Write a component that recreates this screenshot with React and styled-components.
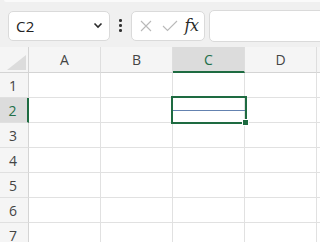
import React from "react";
import styled, { createGlobalStyle } from "styled-components";

const GlobalStyle = createGlobalStyle`
  html, body {
    margin: 0;
    padding: 0;
    background: #ffffff;
    overflow: hidden;
  }
  body {
    font-family: "Open Sans", "Noto Sans", sans-serif;
  }
`;

const COLUMNS = ["A", "B", "C", "D", ""];
const ROWS = [1, 2, 3, 4, 5, 6, 7];
const ACTIVE_COL = "C";
const ACTIVE_ROW = 2;

export default function App() {
  return (
    <>
      <GlobalStyle />
      <StyledPage>
        <StyledToolbar>
          <StyledTopStrip />
          <StyledNameBox>
            <StyledNameText>C2</StyledNameText>
            <ChevronIcon />
          </StyledNameBox>
          <StyledDots>
            <span />
            <span />
            <span />
          </StyledDots>
          <StyledFxGroup>
            <CancelIcon />
            <CheckIcon />
            <StyledFx>fx</StyledFx>
          </StyledFxGroup>
          <StyledFormulaInput />
        </StyledToolbar>

        <StyledGrid>
          <StyledCorner>
            <StyledCornerTriangle />
          </StyledCorner>
          {COLUMNS.map((col, i) => (
            <StyledColHeader key={i} $active={col === ACTIVE_COL}>
              {col}
            </StyledColHeader>
          ))}
          {ROWS.map((row) => (
            <React.Fragment key={row}>
              <StyledRowHeader $active={row === ACTIVE_ROW}>{row}</StyledRowHeader>
              {COLUMNS.map((col, i) => (
                <StyledCell key={i}>
                  {row === ACTIVE_ROW && col === ACTIVE_COL && (
                    <StyledSelection>
                      <StyledEditLine />
                      <StyledFillHandle />
                    </StyledSelection>
                  )}
                </StyledCell>
              ))}
            </React.Fragment>
          ))}
        </StyledGrid>
      </StyledPage>
    </>
  );
}

const ChevronIcon = () => (
  <svg width="10" height="7" viewBox="0 0 10 7">
    <path d="M1.5 1.5 L5 5 L8.5 1.5" fill="none" stroke="#2b2b2b" strokeWidth="1.6" />
  </svg>
);

const CancelIcon = () => (
  <svg width="14" height="14" viewBox="0 0 14 14">
    <path d="M2 2 L12 12 M12 2 L2 12" fill="none" stroke="#b9b9b9" strokeWidth="1.1" />
  </svg>
);

const CheckIcon = () => (
  <svg width="16" height="12" viewBox="0 0 16 12">
    <path d="M1 6 L5.5 10.5 L15 1" fill="none" stroke="#b9b9b9" strokeWidth="1.1" />
  </svg>
);

const StyledPage = styled.div`
  width: 320px;
  height: 247px;
  overflow: hidden;
  background: #ffffff;
`;

const StyledToolbar = styled.div`
  position: relative;
  display: flex;
  align-items: center;
  height: 47px;
  box-sizing: border-box;
  padding: 11px 0 7px 8px;
  background: #f0f0f0;
`;

const StyledTopStrip = styled.div`
  position: absolute;
  top: 0;
  left: 4px;
  right: 0;
  height: 2px;
  background: #fafafa;
  border-bottom-left-radius: 4px;
`;

const StyledNameBox = styled.div`
  display: flex;
  align-items: center;
  justify-content: space-between;
  width: 102px;
  height: 30px;
  box-sizing: border-box;
  padding: 0 6px 0 7px;
  background: #ffffff;
  border: 1px solid #dadada;
  border-radius: 5px;
`;

const StyledNameText = styled.span`
  font-family: "Open Sans", "Noto Sans", sans-serif;
  font-size: 15px;
  color: #222222;
  letter-spacing: 0.2px;
`;

const StyledDots = styled.div`
  display: flex;
  flex-direction: column;
  gap: 2.5px;
  margin: 0 9px 0 9px;

  span {
    display: block;
    width: 2.5px;
    height: 2.5px;
    border-radius: 50%;
    background: #333333;
  }
`;

const StyledFxGroup = styled.div`
  display: flex;
  align-items: center;
  gap: 9px;
  width: 74px;
  height: 30px;
  box-sizing: border-box;
  padding: 0 0 0 7px;
  background: #ffffff;
  border: 1px solid #dadada;
  border-radius: 5px;
`;

const StyledFx = styled.span`
  font-family: "DejaVu Serif", "Liberation Serif", serif;
  font-style: italic;
  font-size: 16px;
  color: #2a2a2a;
  margin-left: -2px;
  letter-spacing: -0.5px;
`;

const StyledFormulaInput = styled.div`
  flex: 1;
  height: 30px;
  margin-left: 4px;
  margin-right: -10px;
  background: #ffffff;
  border: 1px solid #dadada;
  border-radius: 5px;
`;

const StyledGrid = styled.div`
  display: grid;
  grid-template-columns: 29px repeat(5, 72px);
  grid-template-rows: 26px;
  grid-auto-rows: 25px;
  height: 195px;
  overflow: hidden;
`;

const StyledCorner = styled.div`
  position: relative;
  background: #f5f5f5;
  border-right: 1px solid #d4d4d4;
  border-bottom: 1px solid #d4d4d4;
`;

const StyledCornerTriangle = styled.div`
  position: absolute;
  right: 2px;
  bottom: 2px;
  width: 0;
  height: 0;
  border-left: 19px solid transparent;
  border-bottom: 15px solid #dcdcdc;
`;

const StyledColHeader = styled.div`
  display: flex;
  align-items: center;
  justify-content: center;
  box-sizing: border-box;
  font-size: 14px;
  color: ${(p) => (p.$active ? "#22704a" : "#444444")};
  background: ${(p) => (p.$active ? "#dcdcdc" : "#f5f5f5")};
  border-right: 1px solid #dedede;
  border-bottom: ${(p) => (p.$active ? "2px solid #1e6b41" : "1px solid #d4d4d4")};
`;

const StyledRowHeader = styled.div`
  display: flex;
  align-items: center;
  justify-content: center;
  box-sizing: border-box;
  padding-right: 2px;
  font-size: 14px;
  color: ${(p) => (p.$active ? "#22704a" : "#444444")};
  background: ${(p) => (p.$active ? "#dcdcdc" : "#f5f5f5")};
  border-right: ${(p) => (p.$active ? "2px solid #1e6b41" : "1px solid #d4d4d4")};
  border-bottom: 1px solid #e0e0e0;
`;

const StyledCell = styled.div`
  position: relative;
  border-right: 1px solid #e1e1e1;
  border-bottom: 1px solid #e1e1e1;
`;

const StyledSelection = styled.div`
  position: absolute;
  top: -2px;
  left: -2px;
  right: -3px;
  bottom: -2px;
  box-sizing: border-box;
  border: 2px solid #1e6b41;
  z-index: 2;
`;

const StyledEditLine = styled.div`
  position: absolute;
  left: 0;
  right: 0;
  top: 12px;
  height: 1px;
  background: #6482b0;
`;

const StyledFillHandle = styled.div`
  position: absolute;
  right: -3px;
  bottom: -3px;
  width: 5px;
  height: 5px;
  background: #1e6b41;
  box-shadow: 0 0 0 1px #ffffff;
`;
